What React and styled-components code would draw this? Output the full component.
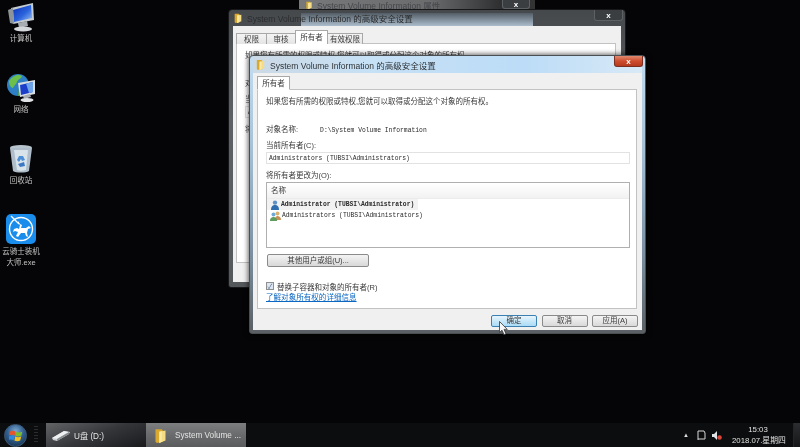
import React from 'react';
import styled, { createGlobalStyle } from 'styled-components';

const CJK = `"Liberation Sans", "Noto Sans CJK SC", sans-serif`;
const MONO = `"Liberation Mono", "Noto Sans CJK SC", monospace`;

const GlobalStyle = createGlobalStyle`
    html, body {
        margin: 0;
        padding: 0;
        background: #050507;
    }
`;

const FolderIcon = ({ size = 12 }) => (
    <svg width={size} height={size} viewBox="0 0 12 12">
        <path d="M2 1h5l1 1v9l-5 1-1-1z" fill="#d9a92e" />
        <path d="M5 3l5-1v8l-5 2z" fill="#f6dc83" />
        <path d="M5 3l2-.4V11l-2 1z" fill="#f9eaa8" />
    </svg>
);

const ComputerIcon = () => (
    <svg width="30" height="30" viewBox="0 0 30 30">
        <defs>
            <linearGradient id="screenA" x1="0" y1="0" x2="1" y2="1">
                <stop offset="0" stopColor="#0b2fb8" />
                <stop offset="0.55" stopColor="#2a63dc" />
                <stop offset="1" stopColor="#9cc4f4" />
            </linearGradient>
        </defs>
        <path d="M5 6l22-5 1 17-21 4z" fill="#c4cbd1" />
        <path d="M7 8l18-5 1 13-18 4z" fill="url(#screenA)" />
        <path d="M2 8l5-2 1 16-4-1z" fill="#8d949a" />
        <path d="M12 21l9-2 1 5-9 2z" fill="#a7adb2" />
        <ellipse cx="17" cy="27" rx="9" ry="2.6" fill="#d5d8da" />
    </svg>
);

const NetworkIcon = () => (
    <svg width="30" height="30" viewBox="0 0 30 30">
        <circle cx="12" cy="12" r="11" fill="#2f7fc4" />
        <path d="M3 8c4-6 10-7 13-5-1 3-4 3-5 6s-3 3-4 6c-2 0-4-3-4-7z" fill="#6cc04a" />
        <path d="M13 15l5 1-1 5-5 2z" fill="#58a83e" />
        <path d="M12 10l17-3v14l-15 3z" fill="#d8dde1" />
        <path d="M14 12l13-3v10l-12 3z" fill="#1b3fc8" />
        <path d="M20 10.500l7-1.500v10l-4 1z" fill="#6ea4ea" />
        <path d="M17 23l7-2 1 3-7 2z" fill="#a7adb2" />
        <ellipse cx="21" cy="27" rx="6.500" ry="2" fill="#e1e4e6" />
    </svg>
);

const RecycleIcon = () => (
    <svg width="30" height="30" viewBox="0 0 30 30">
        <ellipse cx="15" cy="3.500" rx="11" ry="2.600" fill="#b8c4cc" />
        <path d="M4 4h22l-3 23c-3 2-13 2-16 0z" fill="#aebdc9" />
        <path d="M8 6h14l-2 20c-3 1-7 1-9 0z" fill="#d9e3ea" />
        <path d="M13 12l4 0 2 4-3 1-1-2-2 3-2-2z" fill="#4e8ed6" />
        <path d="M12 20l6-2 1 4-5 1z" fill="#3d78c4" />
    </svg>
);

const RiderIcon = () => (
    <svg width="32" height="32" viewBox="0 0 32 32">
        <rect x="1" y="1" width="30" height="30" rx="5" fill="#1a8cec" />
        <circle cx="16" cy="16" r="11.500" fill="none" stroke="#fff" strokeWidth="1.400" />
        <path d="M6 3l8 8" stroke="#fff" strokeWidth="1.200" />
        <path
            d="M13 8l2 3 2 1-1 3 5 0 3-2 2 2-3 1-1 4 1 4-2-1-1-3-4 0-3 4-2-1 2-4-3-1-2 1 1-3 3-1 2 1 1-4-2-2z"
            fill="#fff"
        />
    </svg>
);

const UserIcon = () => (
    <svg width="10" height="10" viewBox="0 0 10 10">
        <circle cx="5" cy="2.600" r="2.200" fill="#5b92c8" />
        <path d="M1 10c0-4 2-5 4-5s4 1 4 5z" fill="#2f6fb0" />
    </svg>
);

const UsersIcon = () => (
    <svg width="11" height="10" viewBox="0 0 11 10">
        <circle cx="7.500" cy="2.500" r="2" fill="#d8b070" />
        <path d="M5 9c0-3 1-4 2.500-4S11 6 11 9z" fill="#c98f55" />
        <circle cx="3.500" cy="3.600" r="2" fill="#6fa9d4" />
        <path d="M0 10c0-3 1.500-4 3.500-4S7 7 7 10z" fill="#5e9b5c" />
    </svg>
);

const DriveIcon = () => (
    <svg width="20" height="14" viewBox="0 0 20 14">
        <path d="M1 10l12-7 6 1-1 2-12 7-4-1z" fill="#c9cccf" />
        <path d="M1 10l5 1 12-7-5-1z" fill="#eef0f1" />
        <path d="M6 11l12-7v2L6 13z" fill="#85898c" />
    </svg>
);

const StartFlag = () => (
    <svg width="14" height="13" viewBox="0 0 14 13">
        <path d="M1 2.500c2-1 4-1 5.500 0l-.8 4C4 5.500 2 5.500 0 6.500z" fill="#e8552c" />
        <path d="M7.300 2.800c1.800 1 3.800 1 6 0l-1 4c-2 1-4 1-5.800 0z" fill="#7cbb2e" />
        <path d="M0 7.300c2-1 4-1 5.600 0l-.9 4c-1.700-1-3.700-1-5.500 0z" fill="#2d8ae0" />
        <path d="M6.300 7.600c1.800 1 3.800 1 5.900 0l-1 4c-2 1-4 1-5.800 0z" fill="#f4c21f" />
    </svg>
);

const Cursor = styled.svg`
    position: absolute;
    left: 499px;
    top: 321px;
    z-index: 5;
`;

const TrayFlag = () => (
    <svg width="9" height="11" viewBox="0 0 9 11">
        <path d="M1 1h6M1 1v9M1 9h7V3" fill="none" stroke="#d8d8d8" strokeWidth="1" />
        <path d="M7 1l1 2" stroke="#d8d8d8" />
    </svg>
);

const TraySpeaker = () => (
    <svg width="10" height="11" viewBox="0 0 10 11">
        <path d="M0 4h2l3-3v9L2 7H0z" fill="#dfe3e6" />
        <circle cx="7.500" cy="7.500" r="2.300" fill="#d8453a" />
    </svg>
);

const Screen = styled.div`
    width: 800px;
    height: 447px;
    display: flex;
    flex-direction: column;
    overflow: hidden;
    background: #050507;
    font-family: ${CJK};
    filter: blur(0.5px);
`;

const Desktop = styled.div`
    position: relative;
    flex: 1;
    overflow: hidden;
`;

const IconColumn = styled.div`
    display: grid;
    grid-auto-rows: 71px;
    width: 42px;
    padding-top: 2px;
`;

const DesktopIcon = styled.div`
    display: flex;
    flex-direction: column;
    align-items: center;
    color: #c4c4c4;
    font-size: 7.500px;
    line-height: 11px;
    text-align: center;

    svg {
        display: block;
        margin-bottom: 1px;
    }
`;

const AppIcon = styled(DesktopIcon)`
    svg {
        margin-top: -2px;
    }
`;

const Window = styled.div`
    position: absolute;
    box-sizing: border-box;
    display: flex;
    flex-direction: column;
    border-radius: 4px 4px 3px 3px;
`;

const BehindWindow = styled(Window)`
    left: 299px;
    top: -12px;
    width: 236px;
    height: 24px;
    z-index: 1;
    padding-top: 12px;
    background: linear-gradient(90deg, #77787a 0, #6b6c6e 55%, #2f3032 85%, #333 100%);
`;

const BackWindow = styled(Window)`
    left: 228px;
    top: 9px;
    width: 398px;
    height: 279px;
    z-index: 2;
    padding: 0 4px 5px;
    border: 1px solid #16181a;
    background: linear-gradient(180deg, #46494c 0, #5e6266 40%, #55585b 100%);
`;

const FrontWindow = styled(Window)`
    left: 249px;
    top: 55px;
    width: 397px;
    height: 279px;
    z-index: 3;
    padding: 0 3px 3px;
    border: 1px solid #4a4f54;
    background: linear-gradient(180deg, #c3ddf3 0, #a9c4d9 30%, #7c92a4 70%, #5a6064 100%);
    box-shadow: 0 0 5px 1px rgba(0, 0, 0, 0.6);
`;

const TitleBar = styled.div`
    position: relative;
    display: flex;
    align-items: center;
    flex: none;
    gap: 4px;
    height: ${(p) => p.$height}px;
    padding-left: ${(p) => p.$inset}px;
    font-size: 8.500px;
    white-space: nowrap;
    color: ${(p) => p.$color};
    background: ${(p) => p.$bg || 'none'};
`;

const GlassGlow = styled.div`
    position: absolute;
    left: 68px;
    top: 3px;
    width: 232px;
    height: 13px;
    background: linear-gradient(180deg, rgba(130, 170, 205, 0.2), rgba(205, 226, 245, 0.75));
`;

const TitleText = styled.span`
    position: relative;
`;

const CloseButton = styled.div`
    position: relative;
    display: flex;
    align-items: center;
    justify-content: center;
    align-self: flex-start;
    box-sizing: border-box;
    margin-left: auto;
    width: ${(p) => p.$width}px;
    height: ${(p) => p.$h}px;
    margin-right: ${(p) => p.$right}px;
    border-radius: 0 0 3px 3px;
    border: 1px solid ${(p) => (p.$active ? '#7a3020' : '#5e6164')};
    border-top: none;
    color: #fff;
    font: bold 8px "Liberation Sans", sans-serif;
    background: ${(p) =>
        p.$active ? 'linear-gradient(180deg, #e08a70 0, #cf4d2e 50%, #b53a1e 100%)' : '#3b3e41'};
`;

const WindowBody = styled.div`
    flex: 1;
    min-height: 0;
    display: flex;
    flex-direction: column;
    padding: 3px 5px 0 ${(p) => p.$left}px;
    background: #f0f0f0;
`;

const TabRow = styled.div`
    display: flex;
    align-items: flex-end;
    height: ${(p) => p.$height}px;
    flex: none;
    position: relative;
    top: 1px;
    z-index: 1;
`;

const Tab = styled.div`
    box-sizing: border-box;
    width: ${(p) => p.$width}px;
    height: ${(p) => (p.$active ? 14 : 11)}px;
    line-height: ${(p) => (p.$active ? 13 : 11)}px;
    text-align: center;
    font-size: 7.500px;
    color: #3a3a3a;
    border: 1px solid #a8a8a8;
    border-bottom: ${(p) => (p.$active ? '1px solid #fff' : 'none')};
    margin-right: -1px;
    background: ${(p) => (p.$active ? '#fff' : 'linear-gradient(180deg, #f4f4f4, #e4e4e4)')};
`;

const TabPanel = styled.div`
    box-sizing: border-box;
    flex: none;
    height: 220px;
    padding: 6px 6px 0 8px;
    background: #fff;
    border: 1px solid #c2c2c2;
    overflow: hidden;
`;

const Line = styled.div`
    height: 12px;
    line-height: 12px;
    margin-top: ${(p) => p.$top || 0}px;
    font-size: 7.500px;
    color: #3a3a3a;
    white-space: nowrap;
`;

const Mono = styled.span`
    font-family: ${MONO};
    font-size: 6.350px;
    color: #2a2a2a;
    margin-left: ${(p) => p.$left || 0}px;
`;

const OwnerField = styled.div`
    box-sizing: border-box;
    height: 12px;
    line-height: 10px;
    font-size: 6.350px;
    padding-left: 2px;
    border: 1px solid #e2e2e2;
`;

const ListBox = styled.div`
    box-sizing: border-box;
    height: 66px;
    border: 1px solid #b0b0b0;
`;

const ListHeader = styled.div`
    height: 15px;
    line-height: 15px;
    padding-left: 4px;
    font-size: 7.500px;
    color: #3a3a3a;
    background: linear-gradient(180deg, #fff, #f2f2f2);
    border-bottom: 1px solid #ececec;
`;

const ListRow = styled.div`
    display: flex;
    align-items: center;
    gap: 1px;
    width: fit-content;
    height: 11px;
    padding: 0 4px 0 3px;
    background: ${(p) => (p.$selected ? '#f2f2f2' : 'none')};

    ${Mono} {
        font-weight: ${(p) => (p.$selected ? 700 : 400)};
    }
`;

const PickButton = styled.div`
    box-sizing: border-box;
    width: 102px;
    height: 13px;
    line-height: 11px;
    margin: 6px 0 13px 1px;
    text-align: center;
    font-size: 7.500px;
    color: #3a3a3a;
    border: 1px solid #8a8a8a;
    border-radius: 2px;
    background: linear-gradient(180deg, #f4f4f4, #d8d8d8);
`;

const CheckRow = styled.div`
    display: flex;
    align-items: center;
    gap: 3px;
    height: 12px;
    font-size: 7.500px;
    color: #3a3a3a;
    white-space: nowrap;
`;

const CheckBox = styled.div`
    box-sizing: border-box;
    width: 8px;
    height: 8px;
    line-height: 7px;
    text-align: center;
    font-size: 7px;
    color: #5a6f8c;
    border: 1px solid #8e8f8f;
    background: #dce6f2;
`;

const HelpLink = styled.div`
    height: 12px;
    line-height: 12px;
    font-size: 7.550px;
    color: #0b67c2;
    text-decoration: underline;
    white-space: nowrap;
`;

const ButtonBar = styled.div`
    display: flex;
    justify-content: flex-end;
    gap: 4.500px;
    padding: 6px 0 0;
    margin-right: -1px;
`;

const DialogButton = styled.div`
    box-sizing: border-box;
    width: 46px;
    height: 12px;
    line-height: 10px;
    text-align: center;
    font-size: 7.500px;
    color: #3a3a3a;
    border-radius: 2px;
    border: 1px solid ${(p) => (p.$hot ? '#3c7fb1' : '#8a8a8a')};
    background: ${(p) =>
        p.$hot
            ? 'linear-gradient(180deg, #e8f5fc, #a9dbf6)'
            : 'linear-gradient(180deg, #f4f4f4, #d9d9d9)'};
`;

const Taskbar = styled.div`
    flex: none;
    height: 24px;
    display: flex;
    align-items: stretch;
    background: #0c0d0e;
    box-sizing: border-box;
`;

const StartOrb = styled.div`
    display: flex;
    align-items: center;
    justify-content: center;
    align-self: center;
    width: 23px;
    height: 23px;
    margin: 0 0 0 4px;
    border-radius: 50%;
    border: 1px solid #3f5a78;
    box-sizing: border-box;
    background: radial-gradient(circle at 50% 30%, #7fa9d0 0, #2f5f90 45%, #12263c 100%);
`;

const Grip = styled.div`
    width: 4px;
    margin: 3px 8px 3px 7px;
    background: repeating-linear-gradient(180deg, #2a2c2e 0 1px, transparent 1px 3px);
`;

const TaskButton = styled.div`
    box-sizing: border-box;
    display: flex;
    align-items: center;
    gap: ${(p) => p.$gap}px;
    width: 100px;
    padding-left: ${(p) => p.$pad}px;
    font-size: 8.200px;
    color: #e4e4e4;
    white-space: nowrap;
    background: ${(p) =>
        p.$active
            ? 'linear-gradient(180deg, #7c7d7e 0, #68696a 55%, #5b5c5d 100%)'
            : 'linear-gradient(160deg, #626466 0, #34363a 50%, #191a1c 100%)'};
`;

const Tray = styled.div`
    display: flex;
    align-items: center;
    margin-left: auto;
    color: #e0e0e0;
`;

const TrayArrow = styled.span`
    font-size: 6px;
    margin-right: 8px;
`;

const TrayIcons = styled.div`
    display: flex;
    align-items: center;
    gap: 6px;
    margin-right: 10px;
`;

const Clock = styled.div`
    width: 52px;
    text-align: center;
    font-size: 7.800px;
    line-height: 11px;
    color: #e0e0e0;
    white-space: nowrap;
`;

const ShowDesktop = styled.div`
    align-self: stretch;
    width: 6px;
    margin-left: 9px;
    background: linear-gradient(180deg, #2b2d30, #151618);
    border-left: 1px solid #232527;
`;

// first rows of the owner tab, the back window only shows this much past the front one
const OwnerSummary = () => (
    <>
        <Line>如果您有所需的权限或特权,您就可以取得或分配这个对象的所有权。</Line>
        <Line $top={16}>
            对象名称:
            <Mono $left={22}>D:\System Volume Information</Mono>
        </Line>
        <Line $top={4}>当前所有者(C):</Line>
        <OwnerField>
            <Mono>Administrators (TUBSI\Administrators)</Mono>
        </OwnerField>
        <Line $top={6}>将所有者更改为(O):</Line>
    </>
);

const App = () => (
    <>
        <GlobalStyle />
        <Screen>
            <Desktop>
                <IconColumn>
                    <DesktopIcon>
                        <ComputerIcon />
                        计算机
                    </DesktopIcon>
                    <DesktopIcon>
                        <NetworkIcon />
                        网络
                    </DesktopIcon>
                    <DesktopIcon>
                        <RecycleIcon />
                        回收站
                    </DesktopIcon>
                    <AppIcon>
                        <RiderIcon />
                        云骑士装机
                        <br />
                        大师.exe
                    </AppIcon>
                </IconColumn>

                <BehindWindow>
                    <TitleBar $height={9} $inset={6} $color="#45474a">
                        <FolderIcon size={8} />
                        <TitleText>System Volume Information 属性</TitleText>
                        <CloseButton $width={28} $h={9} $right={5}>x</CloseButton>
                    </TitleBar>
                </BehindWindow>

                <BackWindow>
                    <TitleBar $height={16} $inset={0} $color="#2a2c2e">
                        <GlassGlow />
                        <FolderIcon size={10} />
                        <TitleText>System Volume Information 的高级安全设置</TitleText>
                        <CloseButton $width={29} $h={11} $right={-2}>x</CloseButton>
                    </TitleBar>
                    <WindowBody $left={3}>
                        <TabRow $height={14}>
                            <Tab $width={31}>权限</Tab>
                            <Tab $width={30}>审核</Tab>
                            <Tab $width={33} $active>所有者</Tab>
                            <Tab $width={36}>有效权限</Tab>
                        </TabRow>
                        <TabPanel>
                            <OwnerSummary />
                        </TabPanel>
                    </WindowBody>
                </BackWindow>

                <FrontWindow>
                    <TitleBar
                        $height={17}
                        $inset={2}
                        $color="#2e3336"
                        $bg="linear-gradient(90deg, #ccd9e5 0, #c6e0f5 30%, #bcdcf7 70%, #d8e9f6 100%)"
                    >
                        <FolderIcon size={11} />
                        <TitleText>System Volume Information 的高级安全设置</TitleText>
                        <CloseButton $width={29} $h={11} $right={-1} $active>x</CloseButton>
                    </TitleBar>
                    <WindowBody $left={4}>
                        <TabRow $height={13}>
                            <Tab $width={33} $active>所有者</Tab>
                        </TabRow>
                        <TabPanel>
                            <OwnerSummary />
                            <ListBox>
                                <ListHeader>名称</ListHeader>
                                <ListRow $selected>
                                    <UserIcon />
                                    <Mono>Administrator (TUBSI\Administrator)</Mono>
                                </ListRow>
                                <ListRow>
                                    <UsersIcon />
                                    <Mono>Administrators (TUBSI\Administrators)</Mono>
                                </ListRow>
                            </ListBox>
                            <PickButton>其他用户或组(U)...</PickButton>
                            <CheckRow>
                                <CheckBox>✓</CheckBox>
                                替换子容器和对象的所有者(R)
                            </CheckRow>
                            <HelpLink>了解对象所有权的详细信息</HelpLink>
                        </TabPanel>
                        <ButtonBar>
                            <DialogButton $hot>确定</DialogButton>
                            <DialogButton>取消</DialogButton>
                            <DialogButton>应用(A)</DialogButton>
                        </ButtonBar>
                    </WindowBody>
                </FrontWindow>

                <Cursor width="9" height="15" viewBox="0 0 9 15">
                    <path
                        d="M0.500 0.500v11l2.500-2.300 2 4.500 2-1-2-4.300h3.300z"
                        fill="#f4f6f8"
                        stroke="#333"
                        strokeWidth="0.8"
                    />
                </Cursor>
            </Desktop>

            <Taskbar>
                <StartOrb>
                    <StartFlag />
                </StartOrb>
                <Grip />
                <TaskButton $pad={5} $gap={3}>
                    <DriveIcon />
                    U盘 (D:)
                </TaskButton>
                <TaskButton $active $pad={7} $gap={7}>
                    <FolderIcon size={15} />
                    System Volume ...
                </TaskButton>
                <Tray>
                    <TrayArrow>▲</TrayArrow>
                    <TrayIcons>
                        <TrayFlag />
                        <TraySpeaker />
                    </TrayIcons>
                    <Clock>
                        15:03
                        <br />
                        2018.07.星期四
                    </Clock>
                    <ShowDesktop />
                </Tray>
            </Taskbar>
        </Screen>
    </>
);

export default App;
